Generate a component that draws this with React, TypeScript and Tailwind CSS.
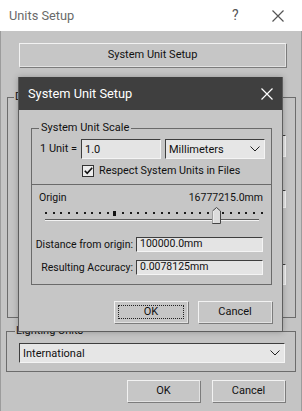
import React from "react";

const font = { fontFamily: 'Roboto, "Noto Sans", sans-serif' };

function Chevron({ className = "" }: { className?: string }) {
  return (
    <svg width="10" height="6" viewBox="0 0 10 6" className={className}>
      <polyline points="0.5,0.5 5,5 9.5,0.5" fill="none" stroke="#222" strokeWidth="1" />
    </svg>
  );
}

function XIcon({ color, size = 12 }: { color: string; size?: number }) {
  return (
    <svg width={size} height={size} viewBox="0 0 12 12">
      <path d="M0.5 0.5 L11.5 11.5 M11.5 0.5 L0.5 11.5" stroke={color} strokeWidth="1.2" fill="none" />
    </svg>
  );
}

function WinButton({ label, focus = false, className = "" }: { label: string; focus?: boolean; className?: string }) {
  return (
    <div
      className={`relative flex items-center justify-center bg-[#c6c6c6] border border-t-[#f2f2f2] border-l-[#f2f2f2] border-r-[#e2e2e2] border-b-[#e2e2e2] shadow-[1px_1px_0_#7c7c7c] text-[11px] text-[#111] ${className}`}
    >
      {focus && <div className="absolute inset-[3px] border border-dotted border-[#222]" />}
      <span className="relative">{label}</span>
    </div>
  );
}

function Field({ value, className = "" }: { value: string; className?: string }) {
  return (
    <div
      className={`flex items-center bg-[#e4e4e4] border border-t-[#3e3e3e] border-l-[#3e3e3e] border-r-[#f4f4f4] border-b-[#f4f4f4] pl-[3px] text-[10.5px] text-[#111] leading-none ${className}`}
    >
      {value}
    </div>
  );
}

function Select({ value, className = "", chevronClass = "mr-[6px]" }: { value: string; className?: string; chevronClass?: string }) {
  return (
    <div
      className={`flex items-center justify-between bg-[#e6e6e6] border border-t-[#3e3e3e] border-l-[#3e3e3e] border-r-[#f4f4f4] border-b-[#f4f4f4] pl-[3px] text-[10.5px] text-[#111] leading-none whitespace-nowrap ${className}`}
    >
      <span>{value}</span>
      <Chevron className={chevronClass} />
    </div>
  );
}

function Slider() {
  const dots: number[] = [];
  for (let i = 0; i < 29; i++) {
    const x = 13 + i * 7.7;
    if (Math.abs(x - 82) < 4 || Math.abs(x - 184) < 6) continue;
    dots.push(x);
  }
  return (
    <svg width="239" height="19" viewBox="0 0 239 19" className="block">
      {dots.map((x, i) => (
        <rect key={i} x={Math.round(x)} y={6} width={2} height={2} fill="#1a1a1a" />
      ))}
      <rect x={81} y={5} width={3} height={5} fill="#111" />
      <line x1={13} y1={13.5} x2={227} y2={13.5} stroke="#5a5a5a" strokeWidth={1} />
      <line x1={13} y1={14.5} x2={227} y2={14.5} stroke="#f2f2f2" strokeWidth={1} />
      <path d="M180.5 17.5 L180.5 5 L184.5 1.5 L188.5 5 L188.5 17.5 Z" fill="#dcdcdc" stroke="#444" strokeWidth={1} />
      <line x1={181} y1={5} x2={181} y2={17} stroke="#f8f8f8" strokeWidth={1} />
    </svg>
  );
}

export default function App() {
  return (
    <div className="relative w-[302px] h-[411px] overflow-hidden bg-[#c4c4c4] select-none" style={font}>
      {/* Outer window title bar */}
      <div className="h-[31px] bg-white flex items-center pl-[9px] text-[12.8px] text-[#6a6a6a]">
        <span className="flex-1">Units Setup</span>
        <span className="w-[40px] text-[14px] text-[#555]">?</span>
        <div className="w-[30px] flex items-center">
          <XIcon color="#555" size={12} />
        </div>
      </div>

      {/* Outer window body */}
      <div className="h-[380px] flex flex-col border-x border-[#9c9c9c]">
        <WinButton label="System Unit Setup" className="mt-[12px] ml-[18px] mr-[15px] h-[24px]" />

        {/* Display Unit Scale group (mostly hidden behind the dialog) */}
        <div className="relative mt-[30px] ml-[6px] mr-[5px] h-[221px] border border-[#6c6c6c] flex flex-col items-end pr-[9px]">
          <span className="absolute -top-[9px] left-[6px] px-[1px] bg-[#c4c4c4] text-[11px] text-[#111] leading-[16px]">
            D
          </span>
          <Select value="" className="mt-[37px] w-[180px] h-[22px]" />
          <Select value="" className="mt-[33px] w-[180px] h-[18px]" />
          <Select value="" className="mt-[56px] w-[180px] h-[21px]" />
        </div>

        {/* Lighting Units group */}
        <div className="relative mt-[13px] ml-[5px] mr-[5px] h-[41px] border border-[#6c6c6c] pt-[11px] pl-[12px] pr-[10px]">
          <span className="absolute -top-[9px] left-[8px] px-[1px] bg-[#c4c4c4] text-[11px] text-[#111] leading-[16px]">
            Lighting Units
          </span>
          <Select value="International" className="h-[20px] text-[11px]" chevronClass="mr-[4px]" />
        </div>

        <div className="mt-[8px] flex justify-end gap-[12px] pr-[16px]">
          <WinButton label="OK" className="w-[73px] h-[22px]" />
          <WinButton label="Cancel" className="w-[73px] h-[22px]" />
        </div>
      </div>

      {/* System Unit Setup dialog (overlay) */}
      <div className="absolute left-[18px] top-[77px] w-[265px] h-[255px] bg-[#c6c6c6] border border-[#5e5e5e] border-t-0 shadow-[0_0_6px_rgba(0,0,0,0.25)] flex flex-col">
        <div className="h-[33px] shrink-0 bg-[#3f3f3f] flex items-center pl-[9px] pr-[9px] text-white text-[12.8px]">
          <span className="flex-1">System Unit Setup</span>
          <XIcon color="#ffffff" size={12} />
        </div>

        <div className="relative mt-[18px] ml-[12px] mr-[10px] border border-[#6a6a6a] flex flex-col">
          <span className="absolute -top-[9px] left-[7px] px-[2px] bg-[#c6c6c6] text-[11px] text-[#111] leading-[16px]">
            System Unit Scale
          </span>
          <div className="flex items-center h-[20px] mt-[10px] pl-[8px] gap-[4px]">
            <span className="w-[37px] text-[11px] text-[#111] whitespace-nowrap">1 Unit =</span>
            <Field value="1.0" className="w-[80px] h-[20px] text-[11px]" />
            <Select value="Millimeters" className="w-[100px] h-[20px] text-[11px]" chevronClass="mr-[4px]" />
          </div>
          <div className="flex items-center h-[12px] mt-[6px] pl-[50px] gap-[5px]">
            <div className="w-[12px] h-[12px] bg-[#ececec] border border-[#333] flex items-center justify-center">
              <svg width="9" height="8" viewBox="0 0 9 8">
                <polyline points="0.8,3.8 3.2,6.4 8.2,0.8" fill="none" stroke="#111" strokeWidth="1.6" />
              </svg>
            </div>
            <span className="text-[10.8px] text-[#111] leading-[12px] whitespace-nowrap">Respect System Units in Files</span>
          </div>
          <div className="mt-[7px] border-t border-[#6a6a6a]" />
          <div className="flex justify-between items-center h-[16px] mt-[5px] pl-[7px] pr-[8px] text-[10.5px] text-[#111] leading-[16px]">
            <span>Origin</span>
            <span>16777215.0mm</span>
          </div>
          <Slider />
          <div className="flex items-center h-[15px] mt-[12px]">
            <span className="w-[104px] pr-[3px] text-right text-[10.5px] text-[#111] whitespace-nowrap">Distance from origin:</span>
            <Field value="100000.0mm" className="w-[127px] h-[15px]" />
          </div>
          <div className="flex items-center h-[15px] mt-[8px] mb-[9px]">
            <span className="w-[104px] pr-[3px] text-right text-[10.5px] text-[#111] whitespace-nowrap">Resulting Accuracy:</span>
            <Field value="0.0078125mm" className="w-[127px] h-[15px]" />
          </div>
        </div>

        <div className="mt-[16px] flex justify-end gap-[10px] pr-[10px]">
          <WinButton label="OK" focus className="w-[74px] h-[22px]" />
          <WinButton label="Cancel" className="w-[74px] h-[22px]" />
        </div>
      </div>
    </div>
  );
}
